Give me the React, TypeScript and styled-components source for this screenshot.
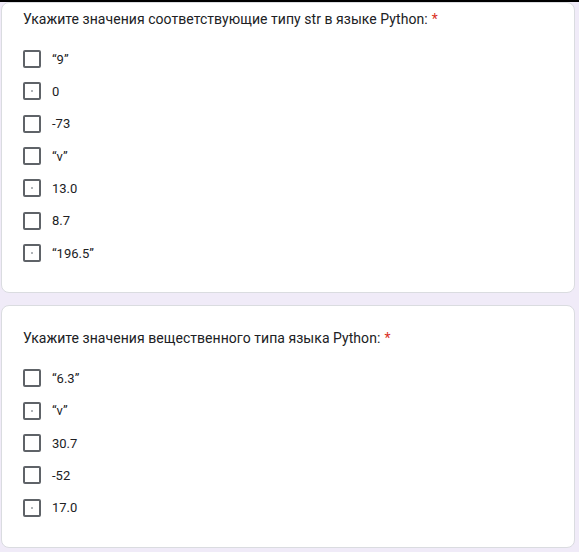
import React, { FC } from 'react'
import styled, { createGlobalStyle } from 'styled-components'

const GlobalStyle = createGlobalStyle`
  html, body {
    margin: 0;
    padding: 0;
    background: #f0ebf8;
  }
  body {
    font-family: Roboto, 'Noto Sans', Arial, sans-serif;
    color: #202124;
  }
`

const Page = styled.div`
  width: 579px;
  height: 552px;
  overflow: hidden;
  border-top: 2px solid #000;
  box-sizing: border-box;
  display: flex;
  flex-direction: column;
  gap: 12px;
`

interface CardProps {
  padTop: number
}

const Card = styled.div<CardProps>`
  margin-left: 1px;
  width: 574px;
  box-sizing: border-box;
  background: #fff;
  border: 1px solid #dadce0;
  border-radius: 8px;
  padding: ${({ padTop }) => padTop}px 21px 23px 21px;
`

const Title = styled.div`
  font-size: 14px;
  line-height: 20px;
  letter-spacing: 0.05px;
  margin-bottom: 14px;
`

const Required = styled.span`
  color: #d93025;
  margin-left: 4px;
`

const Option = styled.label`
  display: flex;
  align-items: center;
  height: 32.33px;
  font-size: 13px;
`

const Box = styled.span`
  width: 18px;
  height: 18px;
  box-sizing: border-box;
  border: 2px solid #5f6368;
  border-radius: 2px;
  margin-right: 11px;
  flex-shrink: 0;
  display: flex;
  align-items: center;
  justify-content: center;
`

const Dot = styled.span`
  width: 2px;
  height: 2px;
  background: #b0b4b8;
`

interface QuestionProps {
  title: string
  options: { label: string; dot?: boolean }[]
  padTop: number
}

const Question: FC<QuestionProps> = ({ title, options, padTop }) => (
  <Card padTop={padTop}>
    <Title>
      {title}
      <Required>*</Required>
    </Title>
    {options.map((o) => (
      <Option key={o.label}>
        <Box>{o.dot && <Dot />}</Box>
        {o.label}
      </Option>
    ))}
  </Card>
)

export default function App() {
  return (
    <>
      <GlobalStyle />
      <Page>
        <Question
          padTop={6}
          title="Укажите значения соответствующие типу str в языке Python:"
          options={[
            { label: '“9”' },
            { label: '0', dot: true },
            { label: '-73' },
            { label: '“v”' },
            { label: '13.0', dot: true },
            { label: '8.7' },
            { label: '“196.5”', dot: true },
          ]}
        />
        <Question
          padTop={22}
          title="Укажите значения вещественного типа языка Python:"
          options={[
            { label: '“6.3”' },
            { label: '“v”', dot: true },
            { label: '30.7' },
            { label: '-52' },
            { label: '17.0', dot: true },
          ]}
        />
      </Page>
    </>
  )
}
